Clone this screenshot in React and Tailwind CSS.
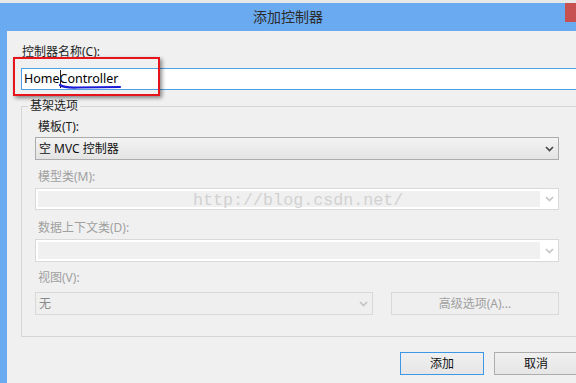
import React from "react";

const Chevron = ({ color = "#444" }) => (
  <svg width="9" height="6" viewBox="0 0 9 6">
    <polyline points="1,1 4.5,4.5 8,1" fill="none" stroke={color} strokeWidth="1.6" />
  </svg>
);

const DisabledBox = ({ w = "w-[524px]", h = "h-[22px]" }) => (
  <div className={`${w} ${h} border border-[#d9d9d9] bg-white flex`}>
    <div className="flex-1 m-[2px] mr-0 bg-[#f0f0f0]" />
    <div className="w-[18px] flex items-center justify-center">
      <Chevron color="#c4c4c4" />
    </div>
  </div>
);

export default function App() {
  return (
    <div className="relative w-[576px] h-[383px] overflow-hidden bg-[#f0f0f0] font-['Noto_Sans','Noto_Sans_CJK_SC',sans-serif] flex flex-col">
      <div className="h-[3px] shrink-0 bg-[#e6e8ea]" />
      <div className="relative h-[28px] shrink-0 bg-[#6aaaf1] flex items-center justify-center">
        <span className="text-[14px] text-[#2b2b2b] leading-none">添加控制器</span>
        <div className="absolute right-0 top-0 w-[11px] h-[19px] bg-[#c75050]" />
      </div>
      <div className="flex flex-1 min-h-0">
        <div className="w-[7px] shrink-0 bg-[#6aaaf1]" />
        <div className="flex-1 min-w-0 pl-[14px] pt-[13px] flex flex-col">
          <div className="h-[16px] leading-[16px] text-[12px] text-[#1e1e1e] pl-[1px]">控制器名称(C):</div>
          <div className="mt-[8px] w-[570px] shrink-0 h-[22px] border border-[#4d9fe6] bg-white flex items-center pl-[2px] text-[12.5px] text-black">
            HomeController
          </div>
          <div className="relative mt-[16px] w-[570px] shrink-0 h-[231px] border border-[#d5d5d5] pl-[13px] pt-[12px] flex flex-col">
            <div className="absolute left-[6px] top-[-9px] px-[2px] bg-[#f0f0f0] text-[12px] leading-[16px] text-[#1e1e1e]">基架选项</div>
            <div className="h-[16px] leading-[16px] text-[12px] text-[#1e1e1e] pl-[3px]">模板(T):</div>
            <div className="mt-[2px] w-[524px] h-[23px] border border-[#acacac] bg-gradient-to-b from-[#f3f3f3] to-[#e4e4e4] flex items-center pl-[3px] text-[12px] text-[#111]">
              <span className="flex-1">空 MVC 控制器</span>
              <span className="w-[18px] flex justify-center"><Chevron /></span>
            </div>
            <div className="mt-[9px] h-[16px] leading-[16px] text-[12px] text-[#a0a0a0] pl-[3px]">模型类(M):</div>
            <div className="mt-[3px]"><DisabledBox /></div>
            <div className="mt-[10px] h-[16px] leading-[16px] text-[12px] text-[#a0a0a0] pl-[3px]">数据上下文类(D):</div>
            <div className="mt-[3px]"><DisabledBox h="h-[23px]" /></div>
            <div className="mt-[8px] h-[16px] leading-[16px] text-[12px] text-[#a0a0a0] pl-[3px]">视图(V):</div>
            <div className="mt-[6px] flex gap-[18px]">
              <div className="w-[338px] h-[23px] border border-[#d9d9d9] bg-[#efefef] flex items-center pl-[3px] text-[12px] text-[#8a8a8a]">
                <span className="flex-1">无</span>
                <span className="w-[18px] flex justify-center"><Chevron color="#c4c4c4" /></span>
              </div>
              <div className="w-[168px] h-[23px] border border-[#d9d9d9] bg-[#efefef] flex items-center justify-center text-[12px] text-[#a0a0a0]">
                高级选项(A)...
              </div>
            </div>
          </div>
          <div className="mt-[15px] flex gap-[10px] pl-[379px]">
            <div className="w-[84px] shrink-0 h-[23px] border border-[#3c98e6] bg-gradient-to-b from-[#f0f0f0] to-[#e6e6e6] flex items-center justify-center text-[12px] text-[#111]">添加</div>
            <div className="w-[84px] shrink-0 h-[23px] border border-[#adadad] bg-gradient-to-b from-[#f0f0f0] to-[#e6e6e6] flex items-center justify-center text-[12px] text-[#111]">取消</div>
          </div>
        </div>
      </div>

      {/* annotations */}
      <div className="absolute left-[13px] top-[57px] w-[147px] h-[39px] border-2 border-[#e8141c] shadow-[2px_2px_4px_rgba(0,0,0,0.45)]" />
      <div className="absolute left-[60px] top-[70px] w-px h-[18px] bg-[#222]" />
      <svg className="absolute left-[58px] top-[83px]" width="66" height="8" viewBox="0 0 66 8">
        <path d="M2,2 Q6,5 20,4.5 L62,4" fill="none" stroke="#1a1ad6" strokeWidth="2.2" strokeLinecap="round" />
      </svg>
      <div className="absolute left-[193px] top-[191px] text-[16.7px] leading-[20px] text-[#d2d2d2] font-['Liberation_Mono',monospace]">
        http://blog.csdn.net/
      </div>
    </div>
  );
}
